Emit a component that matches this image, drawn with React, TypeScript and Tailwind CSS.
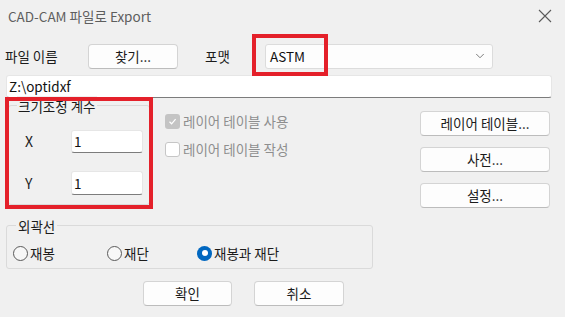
import { ChevronDown } from "lucide-react";

const font = { fontFamily: '"Noto Sans CJK KR", "Noto Sans", sans-serif' };

function Button({ label, className = "" }: { label: string; className?: string }) {
  return (
    <div
      className={`flex h-[25px] items-center justify-center rounded-[4px] border border-[#d4d4d4] border-b-[#bcbcbc] bg-[#fdfdfd] text-[13.5px] text-[#1b1b1b] ${className}`}
    >
      {label}
    </div>
  );
}

function TextBox({ value, className = "" }: { value: string; className?: string }) {
  return (
    <div
      className={`flex items-center rounded-[3px] border border-[#e6e6e6] border-b-[#7c7c7c] bg-white pl-[2px] text-[13.5px] text-[#111] ${className}`}
    >
      {value}
    </div>
  );
}

function Radio({ label, checked = false, className = "" }: { label: string; checked?: boolean; className?: string }) {
  return (
    <div className={`flex h-[16px] items-center ${className}`}>
      {checked ? (
        <span className="flex h-[15px] w-[15px] items-center justify-center rounded-full bg-[#0067c0]">
          <span className="h-[6px] w-[6px] rounded-full bg-white" />
        </span>
      ) : (
        <span className="h-[15px] w-[15px] rounded-full border border-[#5a5a5a] bg-[#f7f7f7]" />
      )}
      <span className="ml-[2px] text-[13.5px] text-[#1b1b1b]">{label}</span>
    </div>
  );
}

export default function App() {
  return (
    <div className="relative h-[317px] w-[565px] overflow-hidden bg-[#f0f0f0]" style={font}>
      {/* title bar */}
      <div className="flex h-[32px] items-center justify-between pl-[8px] pr-[12px]">
        <span className="text-[13.5px] text-[#5e5e5e]">CAD-CAM 파일로 Export</span>
        <svg width="14" height="14" viewBox="0 0 14 14" className="mr-[1px]">
          <path d="M1 1 L13 13 M13 1 L1 13" stroke="#5a5a5a" strokeWidth="1.1" />
        </svg>
      </div>

      {/* file / format row */}
      <div className="mt-[11px] flex h-[26px] items-center pl-[5px]">
        <span className="w-[83px] text-[13.5px] text-[#1b1b1b]">파일 이름</span>
        <Button label="찾기..." className="w-[90px]" />
        <span className="ml-[27px] w-[60px] text-[13.5px] text-[#1b1b1b]">포맷</span>
        <div className="flex h-[25px] w-[228px] items-center justify-between rounded-[3px] border border-[#dcdcdc] bg-[#fdfdfd] pl-[4px] pr-[5px] text-[13.5px] text-[#111]">
          <span>ASTM</span>
          <ChevronDown size={14} strokeWidth={1.5} className="text-[#6a6a6a]" />
        </div>
      </div>

      {/* path */}
      <TextBox value="Z:\optidxf" className="ml-[6px] mt-[6px] h-[23px] w-[546px]" />

      {/* middle */}
      <div className="flex">
        <div className="relative ml-[8px] mt-[7px] h-[100px] w-[142px] rounded-[3px] border border-[#dadada]">
          <span className="absolute -top-[10px] left-[8px] bg-[#f0f0f0] px-[1px] text-[13.5px] text-[#1b1b1b]">
            크기조정 계수
          </span>
          <div className="flex flex-col gap-[18px] pl-[16px] pt-[24px]">
            <div className="flex items-center">
              <span className="w-[46px] text-[14px] text-[#1b1b1b]">X</span>
              <TextBox value="1" className="h-[23px] w-[72px]" />
            </div>
            <div className="flex items-center">
              <span className="w-[46px] text-[14px] text-[#1b1b1b]">Y</span>
              <TextBox value="1" className="h-[24px] w-[72px]" />
            </div>
          </div>
        </div>

        <div className="ml-[15px] mt-[16px] flex flex-col gap-[13px] text-[13.5px] text-[#8e8e8e]">
          <div className="flex h-[15px] items-center">
            <span className="flex h-[15px] w-[15px] items-center justify-center rounded-[3px] bg-[#c4c4c4]">
              <svg width="9" height="9" viewBox="0 0 9 9">
                <path d="M1.5 4.8 L3.6 6.8 L7.6 2.2" stroke="white" strokeWidth="1.2" fill="none" />
              </svg>
            </span>
            <span className="ml-[3px]">레이어 테이블 사용</span>
          </div>
          <div className="flex h-[15px] items-center">
            <span className="h-[15px] w-[15px] rounded-[3px] border border-[#c6c6c6] bg-white" />
            <span className="ml-[3px]">레이어 테이블 작성</span>
          </div>
        </div>

        <div className="ml-auto mr-[15px] mt-[13px] flex flex-col gap-[11px]">
          <Button label="레이어 테이블..." className="w-[130px]" />
          <Button label="사전..." className="w-[130px]" />
          <Button label="설정..." className="w-[130px]" />
        </div>
      </div>

      {/* outline group */}
      <div className="relative ml-[6px] mt-[17px] h-[44px] w-[367px] rounded-[3px] border border-[#dadada]">
        <span className="absolute -top-[10px] left-[9px] bg-[#f0f0f0] px-[2px] text-[13.5px] text-[#1b1b1b]">
          외곽선
        </span>
        <div className="flex pl-[6px] pt-[19px]">
          <Radio label="재봉" className="w-[94px]" />
          <Radio label="재단" className="w-[90px]" />
          <Radio label="재봉과 재단" checked />
        </div>
      </div>

      {/* ok / cancel */}
      <div className="mt-[12px] flex">
        <Button label="확인" className="ml-[143px] w-[89px]" />
        <Button label="취소" className="ml-[22px] w-[90px]" />
      </div>

      {/* red annotation boxes */}
      <div className="pointer-events-none absolute left-[252px] top-[34px] h-[42px] w-[76px] border-[4px] border-[#e4202a]" />
      <div className="pointer-events-none absolute left-[5px] top-[97px] h-[112px] w-[148px] border-[4px] border-[#e4202a]" />
    </div>
  );
}
